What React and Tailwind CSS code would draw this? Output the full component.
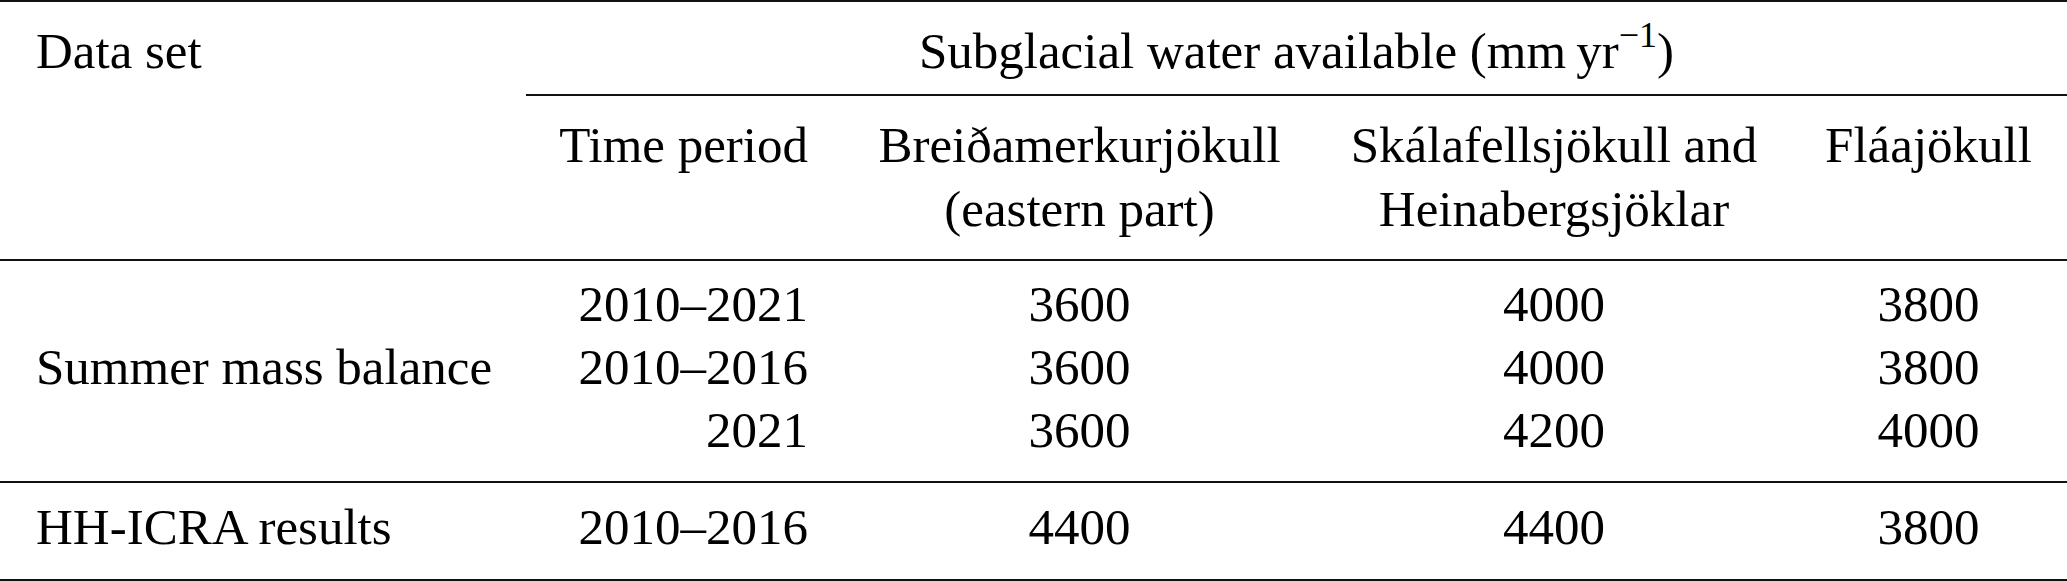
import React from "react";

const cols = "grid grid-cols-[526px_315px_477px_472px_277px]";

const summerRows = [
  { period: "2010–2021", b: "3600", s: "4000", f: "3800" },
  { period: "2010–2016", b: "3600", s: "4000", f: "3800" },
  { period: "2021", b: "3600", s: "4200", f: "4000" },
];

const Line = ({ children }) => <div className="leading-[63px]">{children}</div>;

const App = () => {
  return (
    <div className="w-[2067px] h-[581px] bg-white text-black text-[51px] font-['Liberation_Serif','Times_New_Roman',serif]">
      {/* top rule */}
      <div className="h-[2px] bg-[#111]" />

      {/* header row 1 */}
      <div className={cols}>
        <div className="pl-[36px] pt-[17px] leading-[64px]">Data set</div>
        <div className="col-span-4 pt-[17px] pb-[11px] leading-[64px] text-center border-b-2 border-[#111]">
          Subglacial water available (mm&thinsp;yr
          <span className="relative -top-[21px] text-[36px] leading-none">−1</span>)
        </div>
      </div>

      {/* header row 2 */}
      <div className={`${cols} pt-[17px] pb-[18px] leading-[64px] border-b-2 border-[#111]`}>
        <div />
        <div className="text-right pr-[33px]">Time period</div>
        <div className="text-center">
          <div>Breiðamerkurjökull</div>
          <div>(eastern part)</div>
        </div>
        <div className="text-center">
          <div>Skálafellsjökull and</div>
          <div>Heinabergsjöklar</div>
        </div>
        <div className="text-center">Fláajökull</div>
      </div>

      {/* summer mass balance block */}
      <div className={`${cols} pt-[12px] pb-[19px] border-b-2 border-[#111]`}>
        <div className="flex items-center pl-[36px] leading-[63px]">Summer mass balance</div>
        <div className="text-right pr-[33px]">
          {summerRows.map((r) => (
            <Line key={r.period}>{r.period}</Line>
          ))}
        </div>
        <div className="text-center">
          {summerRows.map((r, i) => (
            <Line key={i}>{r.b}</Line>
          ))}
        </div>
        <div className="text-center">
          {summerRows.map((r, i) => (
            <Line key={i}>{r.s}</Line>
          ))}
        </div>
        <div className="text-center">
          {summerRows.map((r, i) => (
            <Line key={i}>{r.f}</Line>
          ))}
        </div>
      </div>

      {/* HH-ICRA row */}
      <div className={`${cols} pt-[13px] pb-[20px] leading-[63px] border-b-2 border-[#111]`}>
        <div className="pl-[36px]">HH-ICRA results</div>
        <div className="text-right pr-[33px]">2010–2016</div>
        <div className="text-center">4400</div>
        <div className="text-center">4400</div>
        <div className="text-center">3800</div>
      </div>
    </div>
  );
};

export default App;
